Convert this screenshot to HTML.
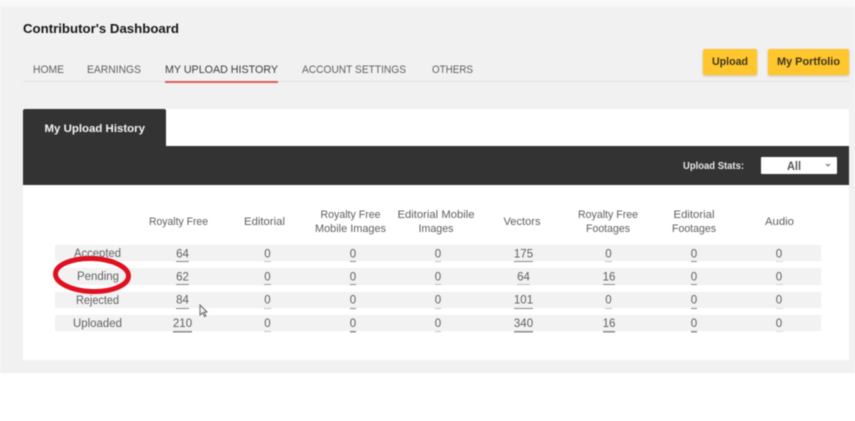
<!DOCTYPE html>
<html>
<head>
<meta charset="utf-8">
<style>
html,body{margin:0;padding:0;width:855px;height:421px;overflow:hidden;background:#fff}
svg{display:block;filter:blur(.45px)}
text{font-family:"Liberation Sans",sans-serif}
.n{font-size:11px;fill:#5f5f5f}
.h{font-size:10.700px;fill:#5f5f5f}
.v{font-size:11.500px;fill:#5f5f5f;text-anchor:middle}
.l{font-size:11.500px;fill:#5f5f5f}
</style>
</head>
<body>
<svg width="855" height="421" viewBox="0 0 855 421" xmlns="http://www.w3.org/2000/svg">
<defs><filter id="s" x="-20%" y="-20%" width="140%" height="150%"><feGaussianBlur stdDeviation="1.200"/></filter></defs>
<rect width="855" height="421" fill="#fff"/>
<rect width="855" height="7" fill="#f8f8f8"/>
<rect y="7" width="855" height="366" fill="#f1f1f1"/>

<text x="23" y="33" font-size="13" font-weight="700" fill="#161616" textLength="156" lengthAdjust="spacingAndGlyphs">Contributor's Dashboard</text>

<text class="n" x="33" y="73" textLength="31" lengthAdjust="spacingAndGlyphs">HOME</text>
<text class="n" x="87" y="73" textLength="54" lengthAdjust="spacingAndGlyphs">EARNINGS</text>
<text class="n" x="165" y="73" textLength="113" lengthAdjust="spacingAndGlyphs" style="fill:#3c3c3c">MY UPLOAD HISTORY</text>
<text class="n" x="302" y="73" textLength="104" lengthAdjust="spacingAndGlyphs">ACCOUNT SETTINGS</text>
<text class="n" x="432" y="73" textLength="41" lengthAdjust="spacingAndGlyphs">OTHERS</text>
<rect x="23" y="81" width="827" height="1" fill="#e3e3e3"/>
<rect x="165" y="81" width="113" height="2" fill="#dc5f5c"/>

<rect x="703" y="50" width="54" height="26" rx="2" fill="#b09a60" opacity=".6" filter="url(#s)"/>
<rect x="768" y="50" width="81" height="26" rx="2" fill="#b09a60" opacity=".6" filter="url(#s)"/>
<rect x="703" y="49" width="54" height="26" rx="2" fill="#ffc62d"/>
<rect x="768" y="49" width="81" height="26" rx="2" fill="#ffc62d"/>
<text x="712" y="65" font-size="11" font-weight="700" fill="#3d3520" textLength="36" lengthAdjust="spacingAndGlyphs">Upload</text>
<text x="777" y="65" font-size="11" font-weight="700" fill="#3d3520" textLength="63" lengthAdjust="spacingAndGlyphs">My Portfolio</text>

<rect x="23" y="109" width="826" height="251" fill="#fff"/>
<path d="M23 185V111a2 2 0 0 1 2-2H164a2 2 0 0 1 2 2V146H849V185Z" fill="#333"/>
<text x="44.500" y="132" font-size="11" font-weight="700" fill="#f4f4f4" textLength="100.500" lengthAdjust="spacingAndGlyphs">My Upload History</text>
<text x="683" y="169" font-size="10" font-weight="700" fill="#e8e8e8" textLength="61" lengthAdjust="spacingAndGlyphs">Upload Stats:</text>
<rect x="761" y="157" width="76" height="17" rx="1" fill="#fff"/>
<text x="787" y="170" font-size="12" font-weight="700" fill="#555" textLength="14" lengthAdjust="spacingAndGlyphs">All</text>
<path d="M825 164h6l-3 3z" fill="#999"/>

<g text-anchor="middle">
<text class="h" x="178.500" y="225" textLength="59" lengthAdjust="spacingAndGlyphs">Royalty Free</text>
<text class="h" x="264.500" y="225" textLength="41" lengthAdjust="spacingAndGlyphs">Editorial</text>
<text class="h" x="350.500" y="218" textLength="60" lengthAdjust="spacingAndGlyphs">Royalty Free</text>
<text class="h" x="350.500" y="232" textLength="71" lengthAdjust="spacingAndGlyphs">Mobile Images</text>
<text class="h" x="436" y="218" textLength="77" lengthAdjust="spacingAndGlyphs">Editorial Mobile</text>
<text class="h" x="436" y="232" textLength="35" lengthAdjust="spacingAndGlyphs">Images</text>
<text class="h" x="522" y="225" textLength="37" lengthAdjust="spacingAndGlyphs">Vectors</text>
<text class="h" x="608" y="218" textLength="60" lengthAdjust="spacingAndGlyphs">Royalty Free</text>
<text class="h" x="608" y="232" textLength="44" lengthAdjust="spacingAndGlyphs">Footages</text>
<text class="h" x="694" y="218" textLength="41" lengthAdjust="spacingAndGlyphs">Editorial</text>
<text class="h" x="694" y="232" textLength="44" lengthAdjust="spacingAndGlyphs">Footages</text>
<text class="h" x="779.500" y="225" textLength="29" lengthAdjust="spacingAndGlyphs">Audio</text>
</g>

<rect x="55" y="245" width="766" height="16" fill="#f2f2f2"/>
<rect x="55" y="268" width="766" height="17" fill="#f2f2f2"/>
<rect x="55" y="292" width="766" height="16" fill="#f2f2f2"/>
<rect x="55" y="315" width="766" height="16" fill="#f2f2f2"/>

<text class="l" x="74" y="257" textLength="47" lengthAdjust="spacingAndGlyphs">Accepted</text>
<text class="l" x="77" y="280" textLength="42" lengthAdjust="spacingAndGlyphs">Pending</text>
<text class="l" x="76" y="304" textLength="43" lengthAdjust="spacingAndGlyphs">Rejected</text>
<text class="l" x="73" y="327" textLength="49" lengthAdjust="spacingAndGlyphs">Uploaded</text>

<g>
<text class="v" x="182.500" y="257.500">64</text><text class="v" x="267.500" y="257.500">0</text><text class="v" x="353" y="257.500">0</text><text class="v" x="438" y="257.500">0</text><text class="v" x="523.500" y="257.500">175</text><text class="v" x="608.500" y="257.500">0</text><text class="v" x="694" y="257.500">0</text><text class="v" x="779" y="257.500">0</text>
<text class="v" x="182.500" y="280.500">62</text><text class="v" x="267.500" y="280.500">0</text><text class="v" x="353" y="280.500">0</text><text class="v" x="438" y="280.500">0</text><text class="v" x="523.500" y="280.500">64</text><text class="v" x="609" y="280.500">16</text><text class="v" x="694" y="280.500">0</text><text class="v" x="779" y="280.500">0</text>
<text class="v" x="182.500" y="303.500">84</text><text class="v" x="267.500" y="303.500">0</text><text class="v" x="353" y="303.500">0</text><text class="v" x="438" y="303.500">0</text><text class="v" x="523.500" y="303.500">101</text><text class="v" x="608.500" y="303.500">0</text><text class="v" x="694" y="303.500">0</text><text class="v" x="779" y="303.500">0</text>
<text class="v" x="182.500" y="327">210</text><text class="v" x="267.500" y="327">0</text><text class="v" x="353" y="327">0</text><text class="v" x="438" y="327">0</text><text class="v" x="523.500" y="327">340</text><text class="v" x="609" y="327">16</text><text class="v" x="694" y="327">0</text><text class="v" x="779" y="327">0</text>
</g>

<g fill="#8a8a8a">
<rect x="176" y="261" width="13" height="1"/><rect x="176" y="284" width="13" height="1"/><rect x="176" y="308" width="13" height="1"/><rect x="173" y="331" width="19" height="1.500"/>
<rect x="264" y="261" width="7" height="1" opacity=".5"/><rect x="264" y="284" width="7" height="1" opacity=".8"/><rect x="264" y="308" width="7" height="1" opacity=".5"/><rect x="264" y="331" width="7" height="1" opacity=".5"/>
<rect x="350" y="261" width="6" height="1"/><rect x="350" y="284" width="6" height="1"/><rect x="350" y="308" width="6" height="1"/><rect x="350" y="331" width="6" height="1.500"/>
<rect x="435" y="261" width="6" height="1" opacity=".5"/><rect x="435" y="284" width="6" height="1" opacity=".5"/><rect x="435" y="308" width="6" height="1" opacity=".5"/><rect x="435" y="331" width="6" height="1" opacity=".5"/>
<rect x="514" y="261" width="19" height="1"/><rect x="517" y="284" width="13" height="1" opacity=".5"/><rect x="514" y="308" width="19" height="1"/><rect x="514" y="331" width="19" height="1.500"/>
<rect x="605" y="261" width="7" height="1" opacity=".5"/><rect x="603" y="284" width="12" height="1"/><rect x="605" y="308" width="7" height="1" opacity=".5"/><rect x="603" y="331" width="12" height="1.500"/>
<rect x="691" y="261" width="6" height="1"/><rect x="691" y="284" width="6" height="1"/><rect x="691" y="308" width="6" height="1"/><rect x="691" y="331" width="6" height="1.500"/>
<rect x="776" y="261" width="7" height="1" opacity=".3"/><rect x="776" y="284" width="7" height="1" opacity=".3"/><rect x="776" y="308" width="7" height="1" opacity=".3"/><rect x="776" y="331" width="7" height="1" opacity=".3"/>
</g>

<ellipse cx="92" cy="275" rx="36.500" ry="16.500" fill="none" stroke="#df1020" stroke-width="5" transform="rotate(2 92 275)"/>

<path d="M200 305V315L202.500 312.800L204.500 316.500L206 315.800L204 312.200L207 312Z" fill="#f4f4f4" stroke="#666" stroke-width="1"/>
</svg>
</body>
</html>
